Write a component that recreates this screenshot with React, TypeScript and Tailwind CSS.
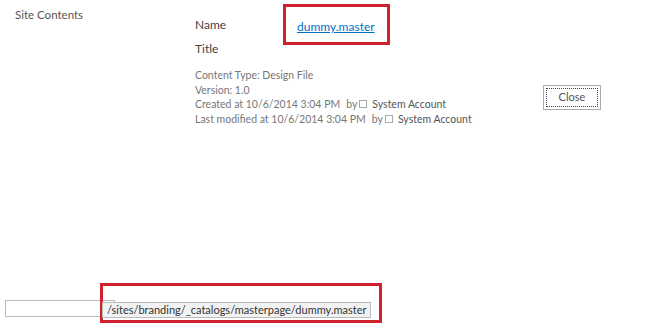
const font = { fontFamily: 'Lato, "Open Sans", sans-serif' };

const metaLines = [
  { text: 'Content Type: Design File' },
  { text: 'Version: 1.0' },
  { text: 'Created at 10/6/2014 3:04 PM', by: 'System Account' },
  { text: 'Last modified at 10/6/2014 3:04 PM', by: 'System Account' },
];

export default function App() {
  return (
    <div className="w-[646px] h-[335px] bg-white overflow-hidden flex flex-col" style={font}>
      <div className="flex h-[283px]">
        {/* left nav */}
        <div className="w-[195px] pl-[15px] pt-[6px] text-[11.5px] text-[#555]">Site Contents</div>

        {/* item properties */}
        <div className="flex flex-col pt-[13px]">
          <div className="flex items-center h-[24px]">
            <div className="w-[102px] text-[12px] text-[#444]">Name</div>
            <div className="relative">
              <a href="#" className="text-[12px] text-[#0072c6] underline">dummy.master</a>
              {/* annotation box */}
              <div className="absolute -left-[14px] -right-[15px] -top-[9px] -bottom-[8px] border-[3px] border-[#d0202e]" />
            </div>
          </div>
          <div className="text-[12px] text-[#444] h-[24px] leading-[24px]">Title</div>

          <div className="flex mt-[7px]">
            <div className="w-[348px] flex flex-col text-[10.5px] text-[#777] leading-[14.5px]">
              {metaLines.map((l) => (
                <div key={l.text} className="flex items-center whitespace-nowrap">
                  <span>{l.text}</span>
                  {l.by && (
                    <>
                      <span className="ml-[6px]">by</span>
                      <span className="ml-[2px] w-[8px] h-[8px] border border-[#aaa] inline-block" />
                      <span className="ml-[5px] text-[#555]">{l.by}</span>
                    </>
                  )}
                </div>
              ))}
            </div>
            <div className="mt-[15px]">
              <button className="w-[58px] h-[25px] border border-[#ababab] bg-white p-[2px]">
                <span className="flex items-center justify-center w-full h-full border border-dotted border-[#444] text-[11px] text-[#555]">
                  Close
                </span>
              </button>
            </div>
          </div>
        </div>
      </div>

      {/* status bar */}
      <div className="relative h-[52px]">
        <div className="absolute left-[5px] top-[17px] w-[110px] h-[17px] border border-[#bbb] bg-white" />
        <div className="absolute left-[100px] top-0 w-[282px] h-[40px] border-[3px] border-[#d0202e]" />
        <div className="absolute left-[102px] top-[19px] h-[16px] px-[4px] bg-[#f2f2f2] border border-[#bbb] text-[11px] text-[#333] leading-[14px] whitespace-nowrap">
          /sites/branding/_catalogs/masterpage/dummy.master
        </div>
      </div>
    </div>
  );
}
